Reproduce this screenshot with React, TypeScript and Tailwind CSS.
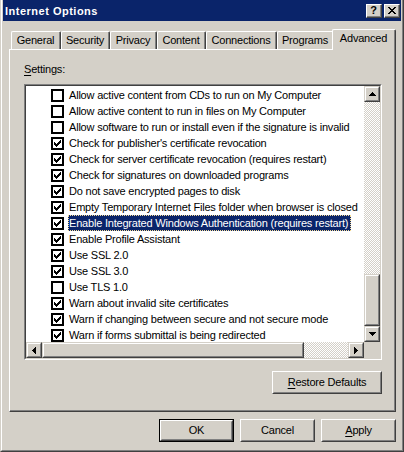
import React from "react";

type Row = { t: string; c: boolean; sel?: boolean };

const rows: Row[] = [
  { t: "Allow active content from CDs to run on My Computer", c: false },
  { t: "Allow active content to run in files on My Computer", c: false },
  { t: "Allow software to run or install even if the signature is invalid", c: false },
  { t: "Check for publisher's certificate revocation", c: true },
  { t: "Check for server certificate revocation (requires restart)", c: true },
  { t: "Check for signatures on downloaded programs", c: true },
  { t: "Do not save encrypted pages to disk", c: true },
  { t: "Empty Temporary Internet Files folder when browser is closed", c: true },
  { t: "Enable Integrated Windows Authentication (requires restart)", c: true, sel: true },
  { t: "Enable Profile Assistant", c: true },
  { t: "Use SSL 2.0", c: true },
  { t: "Use SSL 3.0", c: true },
  { t: "Use TLS 1.0", c: false },
  { t: "Warn about invalid site certificates", c: true },
  { t: "Warn if changing between secure and not secure mode", c: true },
  { t: "Warn if forms submittal is being redirected", c: true },
];

function CheckBox({ checked }: { checked: boolean }) {
  return (
    <div className="relative w-[13px] h-[13px] shrink-0 self-start mt-[2px] border-2 border-black bg-white">
      {checked && (
        <svg
          width="7"
          height="7"
          viewBox="0 0 7 7"
          shapeRendering="crispEdges"
          className="absolute left-[1px] top-[1px]"
        >
          <path
            d="M6 0h1v1H6z M5 1h2v1H5z M0 2h1v1H0z M4 2h3v1H4z M0 3h2v1H0z M3 3h3v1H3z M0 4h5v1H0z M1 5h3v1H1z M2 6h1v1H2z"
            fill="#000"
          />
        </svg>
      )}
    </div>
  );
}

function Raised({ className, children }: { className: string; children?: React.ReactNode }) {
  return (
    <div
      className={`${className} shrink-0 border border-t-[#d4d0c8] border-l-[#d4d0c8] border-r-[#404040] border-b-[#404040] bg-[#d4d0c8]`}
    >
      <div className="w-full h-full border border-t-white border-l-white border-r-[#808080] border-b-[#808080] flex items-center justify-center">
        {children}
      </div>
    </div>
  );
}

function Arrow({ dir }: { dir: "up" | "down" | "left" | "right" }) {
  if (dir === "up")
    return (
      <svg width="7" height="4" viewBox="0 0 7 4" shapeRendering="crispEdges">
        <path d="M3 0h1v1H3z M2 1h3v1H2z M1 2h5v1H1z M0 3h7v1H0z" fill="#000" />
      </svg>
    );
  if (dir === "down")
    return (
      <svg width="7" height="4" viewBox="0 0 7 4" shapeRendering="crispEdges">
        <path d="M0 0h7v1H0z M1 1h5v1H1z M2 2h3v1H2z M3 3h1v1H3z" fill="#000" />
      </svg>
    );
  if (dir === "left")
    return (
      <svg width="4" height="7" viewBox="0 0 4 7" shapeRendering="crispEdges">
        <path d="M0 3h1v1H0z M1 2h1v3H1z M2 1h1v5H2z M3 0h1v7H3z" fill="#000" />
      </svg>
    );
  return (
    <svg width="4" height="7" viewBox="0 0 4 7" shapeRendering="crispEdges">
      <path d="M0 0h1v7H0z M1 1h1v5H1z M2 2h1v3H2z M3 3h1v1H3z" fill="#000" />
    </svg>
  );
}

function Dither({ className }: { className: string }) {
  return (
    <div
      className={`${className} bg-[image:repeating-conic-gradient(#d4d0c8_0_25%,#ffffff_0_50%)] bg-[length:2px_2px]`}
    />
  );
}

function TitleBtn({ children }: { children: React.ReactNode }) {
  return (
    <div className="w-[16px] h-[14px] border border-t-white border-l-white border-r-[#404040] border-b-[#404040] bg-[#d4d0c8]">
      <div className="w-full h-full border-r border-b border-r-[#808080] border-b-[#808080] flex items-center justify-center">
        {children}
      </div>
    </div>
  );
}

function PushBtn({
  children,
  def,
  className,
}: {
  children: React.ReactNode;
  def?: boolean;
  className: string;
}) {
  const inner = (
    <div className="w-full h-full border border-t-white border-l-white border-r-[#404040] border-b-[#404040]">
      <div className="w-full h-full border border-t-[#d4d0c8] border-l-[#d4d0c8] border-r-[#808080] border-b-[#808080] flex items-center justify-center">
        {children}
      </div>
    </div>
  );
  if (def) return <div className={`${className} border border-black`}>{inner}</div>;
  return <div className={className}>{inner}</div>;
}

function Tab({ label, className }: { label: string; className: string }) {
  return (
    <div
      className={`${className} h-[18px] shrink-0 rounded-t-[2px] border-t border-l border-r border-t-white border-l-white border-r-[#404040]`}
    >
      <div className="h-full border-r border-r-[#808080] flex justify-center pt-[2px]">{label}</div>
    </div>
  );
}

export default function App() {
  return (
    <div className="w-[404px] h-[452px] overflow-hidden bg-[#d4d0c8] border-l border-r border-b border-l-[#d4d0c8] border-r-[#404040] border-b-[#404040] font-['Liberation_Sans',Arial,sans-serif] text-[11px] leading-[13px] tracking-[-0.2px] text-black select-none">
      <div className="h-full border-l border-r border-b border-l-white border-r-[#808080] border-b-[#808080] px-[1px] flex flex-col">
        {/* Title bar */}
        <div className="h-[21px] shrink-0 bg-[#0a246a] flex items-start justify-between">
          <div className="mt-[5px] ml-[2px] text-white font-bold tracking-[0.5px]">Internet Options</div>
          <div className="flex gap-[2px] mt-[4px] mr-[1px]">
            <TitleBtn>
              <span className="font-bold text-[11px] leading-[11px] tracking-normal">?</span>
            </TitleBtn>
            <TitleBtn>
              <svg width="8" height="7" viewBox="0 0 8 7" shapeRendering="crispEdges">
                <path
                  d="M0 0h2v1H0z M6 0h2v1H6z M1 1h2v1H1z M5 1h2v1H5z M2 2h4v1H2z M3 3h2v1H3z M2 4h4v1H2z M1 5h2v1H1z M5 5h2v1H5z M0 6h2v1H0z M6 6h2v1H6z"
                  fill="#000"
                />
              </svg>
            </TitleBtn>
          </div>
        </div>

        {/* Client area */}
        <div className="flex flex-col pl-[6px] pr-[5px] pt-[8px]">
          {/* Tabs */}
          <div className="h-[20px] flex items-end pl-[2px]">
            <Tab label="General" className="w-[50px]" />
            <Tab label="Security" className="w-[49px]" />
            <Tab label="Privacy" className="w-[47px]" />
            <Tab label="Content" className="w-[49px]" />
            <Tab label="Connections" className="w-[71px]" />
            <Tab label="Programs" className="w-[57px]" />
            <div className="relative z-10 w-[64px] h-[21px] ml-[-2px] mb-[-1px] shrink-0 rounded-t-[2px] bg-[#d4d0c8] border-t border-l border-r border-t-white border-l-white border-r-[#404040]">
              <div className="h-full border-r border-r-[#808080] flex justify-center pt-[2px]">Advanced</div>
            </div>
          </div>

          {/* Panel */}
          <div className="w-[387px] h-[363px] border-t border-l border-r border-b border-t-white border-l-white border-r-[#404040] border-b-[#404040]">
            <div className="h-full border-r border-b border-r-[#808080] border-b-[#808080] pl-[14px] pt-[13px] flex flex-col">
              <div>
                <span className="underline underline-offset-[2px]">S</span>ettings:
              </div>
              <div className="w-[358px] mt-[8px] flex flex-col items-end">
                {/* List box */}
                <div className="w-[358px] h-[276px] border border-t-[#808080] border-l-[#808080] border-r-white border-b-white">
                  <div className="h-full border border-t-[#404040] border-l-[#404040] border-r-[#d4d0c8] border-b-[#d4d0c8] bg-white flex flex-col">
                    <div className="flex h-[256px]">
                      <div className="w-[338px] overflow-hidden pt-[1px]">
                        {rows.map((r, i) => (
                          <div key={i} className="h-[16px] flex items-center pl-[25px] whitespace-nowrap">
                            <CheckBox checked={r.c} />
                            <span
                              className={
                                r.sel
                                  ? "ml-[4px] h-[16px] flex items-center pr-[2px] border border-dotted border-[#f5db95] bg-[#0a246a] text-white"
                                  : "ml-[4px] h-[16px] flex items-center pr-[2px] border border-transparent"
                              }
                            >
                              {r.t}
                            </span>
                          </div>
                        ))}
                      </div>
                      <div className="w-[16px] flex flex-col">
                        <Raised className="w-[16px] h-[16px]">
                          <Arrow dir="up" />
                        </Raised>
                        <Dither className="flex-1" />
                        <Raised className="w-[16px] h-[52px]" />
                        <Raised className="w-[16px] h-[16px]">
                          <Arrow dir="down" />
                        </Raised>
                      </div>
                    </div>
                    <div className="flex h-[16px]">
                      <div className="w-[338px] flex">
                        <Raised className="w-[16px] h-[16px]">
                          <Arrow dir="left" />
                        </Raised>
                        <Raised className="flex-1 h-[16px]" />
                        <Dither className="w-[44px] h-[16px]" />
                        <Raised className="w-[16px] h-[16px]">
                          <Arrow dir="right" />
                        </Raised>
                      </div>
                      <div className="w-[16px] h-[16px] bg-[#d4d0c8]" />
                    </div>
                  </div>
                </div>
                <PushBtn className="w-[110px] h-[23px] mt-[11px]">
                  <span>
                    <span className="underline underline-offset-[2px]">R</span>estore Defaults
                  </span>
                </PushBtn>
              </div>
            </div>
          </div>

          {/* Dialog buttons */}
          <div className="mt-[7px] flex justify-end gap-[6px]">
            <PushBtn def className="w-[75px] h-[23px]">
              OK
            </PushBtn>
            <PushBtn className="w-[75px] h-[23px]">Cancel</PushBtn>
            <PushBtn className="w-[75px] h-[23px]">
              <span>
                <span className="underline underline-offset-[2px]">A</span>pply
              </span>
            </PushBtn>
          </div>
        </div>
      </div>
    </div>
  );
}
